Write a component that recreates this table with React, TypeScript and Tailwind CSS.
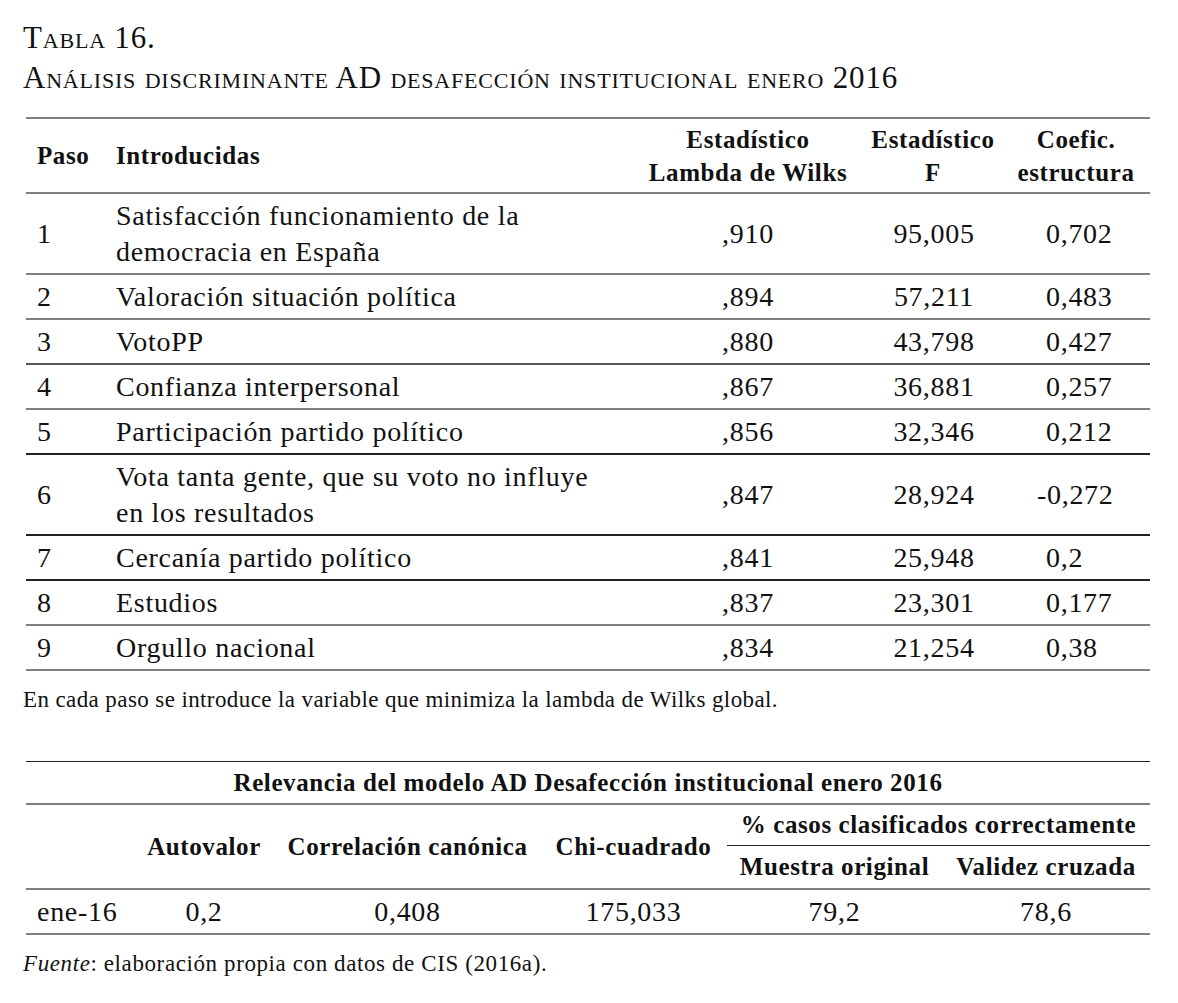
import * as React from "react";

const rows1 = [
  { paso: "1", text: ["Satisfacción funcionamiento de la", "democracia en España"], lambda: ",910", f: "95,005", coef: "0,702", line: "border-[#7f7f7f]" },
  { paso: "2", text: ["Valoración situación política"], lambda: ",894", f: "57,211", coef: "0,483", line: "border-[#7f7f7f]" },
  { paso: "3", text: ["VotoPP"], lambda: ",880", f: "43,798", coef: "0,427", line: "border-[#555]" },
  { paso: "4", text: ["Confianza interpersonal"], lambda: ",867", f: "36,881", coef: "0,257", line: "border-[#7f7f7f]" },
  { paso: "5", text: ["Participación partido político"], lambda: ",856", f: "32,346", coef: "0,212", line: "border-[#222]" },
  { paso: "6", text: ["Vota tanta gente, que su voto no influye", "en los resultados"], lambda: ",847", f: "28,924", coef: "-0,272", line: "border-[#222]" },
  { paso: "7", text: ["Cercanía partido político"], lambda: ",841", f: "25,948", coef: "0,2", line: "border-[#222]" },
  { paso: "8", text: ["Estudios"], lambda: ",837", f: "23,301", coef: "0,177", line: "border-[#7f7f7f]" },
  { paso: "9", text: ["Orgullo nacional"], lambda: ",834", f: "21,254", coef: "0,38", line: "border-[#7f7f7f]" },
];

const grid1 = "grid grid-cols-[79px_535px_216px_154px_140px]";
const grid2 = "grid grid-cols-[107px_142px_265px_187px_215px_208px]";

export default function App() {
  return (
    <div className="min-h-[1003px] w-[1178px] bg-white text-[#111] pl-[26px] pt-[18px] font-['Liberation_Serif','Times_New_Roman',serif]">
      <div className="text-[31px] leading-[40px] [font-variant:small-caps] tracking-[0.8px] -ml-[3px]">
        <div>Tabla 16.</div>
        <div>Análisis discriminante AD desafección institucional enero 2016</div>
      </div>

      <div className="mt-[19px] w-[1124px] border-t-2 border-[#7f7f7f]">
        <div className={`${grid1} h-[75px] items-center border-b-2 border-[#7f7f7f] font-bold text-[25px] tracking-[0.6px] leading-[33px]`}>
          <div className="pl-[11px]">Paso</div>
          <div className="pl-[11px]">Introducidas</div>
          <div className="text-center">Estadístico<br />Lambda de Wilks</div>
          <div className="text-center">Estadístico<br />F</div>
          <div className="text-center pr-[8px]">Coefic.<br />estructura</div>
        </div>
        {rows1.map((r) => (
          <div
            key={r.paso}
            className={`${grid1} items-center text-[28px] tracking-[0.7px] leading-[36px] border-b-2 ${r.line} ${
              r.text.length > 1 ? "h-[81px]" : "h-[45px]"
            }`}
          >
            <div className="pl-[11px]">{r.paso}</div>
            <div className="pl-[11px]">
              {r.text.map((t) => (
                <div key={t}>{t}</div>
              ))}
            </div>
            <div className="text-center">{r.lambda}</div>
            <div className="text-center pl-[2px]">{r.f}</div>
            <div className={r.coef.startsWith("-") ? "pl-[27px]" : "pl-[36px]"}>{r.coef}</div>
          </div>
        ))}
      </div>

      <div className="mt-[14px] text-[23px] tracking-[0.4px] leading-[30px] -ml-[3px]">
        En cada paso se introduce la variable que minimiza la lambda de Wilks global.
      </div>

      <div className="mt-[46px] w-[1124px] border-t-[1.5px] border-[#222]">
        <div className="h-[43px] flex items-center justify-center border-b-2 border-[#7f7f7f] font-bold text-[25px] tracking-[0.6px]">
          Relevancia del modelo AD Desafección institucional enero 2016
        </div>
        <div className={`${grid2} h-[85px] border-b-2 border-[#7f7f7f] font-bold text-[25px] tracking-[0.6px]`}>
          <div />
          <div className="flex items-center justify-center">Autovalor</div>
          <div className="flex items-center justify-center">Correlación canónica</div>
          <div className="flex items-center justify-center">Chi-cuadrado</div>
          <div className="col-span-2 flex flex-col">
            <div className="h-[41px] flex items-center justify-center border-b-[1.5px] border-[#222]">
              % casos clasificados correctamente
            </div>
            <div className="flex-1 grid grid-cols-[215px_208px] items-center">
              <div className="text-center">Muestra original</div>
              <div className="text-center">Validez cruzada</div>
            </div>
          </div>
        </div>
        <div className={`${grid2} h-[45px] items-center border-b-2 border-[#7f7f7f] text-[28px] tracking-[0.7px]`}>
          <div className="pl-[11px]">ene-16</div>
          <div className="text-center">0,2</div>
          <div className="text-center">0,408</div>
          <div className="text-center">175,033</div>
          <div className="text-center">79,2</div>
          <div className="text-center">78,6</div>
        </div>
      </div>

      <div className="mt-[14px] text-[23px] tracking-[0.6px] leading-[30px] -ml-[3px]">
        <span className="italic">Fuente</span>: elaboración propia con datos de CIS (2016a).
      </div>
    </div>
  );
}
